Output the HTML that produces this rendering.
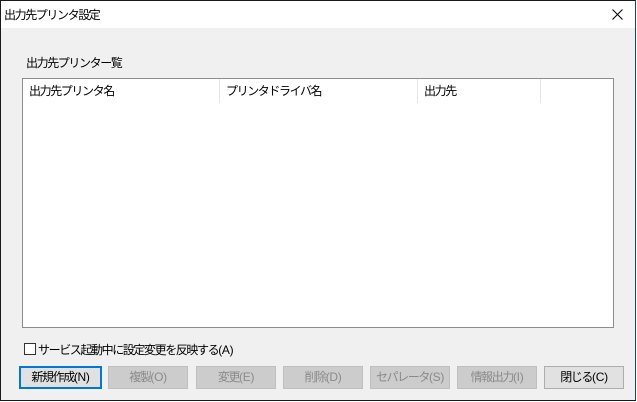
<!DOCTYPE html>
<html><head><meta charset="utf-8"><style>
*{box-sizing:border-box;margin:0;padding:0}
body{width:637px;height:402px;background:#fff;font-family:"Liberation Sans","Noto Sans CJK JP",sans-serif;font-size:12px;color:#000;position:relative;overflow:hidden;letter-spacing:-1.4px}
i{font-style:normal;letter-spacing:-0.3px}
.win{position:absolute;left:0;top:0;width:636px;height:401px;border:1px solid #1a1a1a;border-right-color:#1c3f6e;background:#f0f0f0}
.title{position:absolute;left:0;top:0;width:100%;height:27px;background:#fff}
.title span{position:absolute;left:3px;top:5px;font-size:12px}
.x{position:absolute;right:12px;top:8px}
.lbl{position:absolute;left:25px;top:53px}
.lv{position:absolute;left:21px;top:77px;width:592px;height:250px;background:#fff;border:1px solid #8c8c8c}
.h{position:absolute;top:4px;height:16px;line-height:16px}
.sep{position:absolute;top:0;width:1px;height:24px;background:#e5e5e5}
.cb{position:absolute;left:23px;top:342px;width:12px;height:12px;border:1px solid #333;background:#fff}
.cbl{position:absolute;left:37px;top:340px}
.b{position:absolute;top:365px;height:23px;border:1px solid #adadad;background:#e1e1e1;text-align:center;line-height:21px;color:#000}
.d{color:#8a8a8a;background:#ccc;border-color:#bfbfbf}
.def{border:2px solid #0078d7;line-height:19px}
</style></head><body>
<div class="win">
<div class="title"><span>出力先プリンタ設定</span><svg class="x" width="11" height="11" viewBox="0 0 11 11"><path d="M0.5 0.5L10.5 10.5M10.5 0.5L0.5 10.5" stroke="#000" stroke-width="1"/></svg></div>
<div class="lbl">出力先プリンター覧</div>
<div class="lv">
<div class="h" style="left:6px">出力先プリンタ名</div>
<div class="sep" style="left:196px"></div>
<div class="h" style="left:203px">プリンタドライバ名</div>
<div class="sep" style="left:394px"></div>
<div class="h" style="left:401px">出力先</div>
<div class="sep" style="left:517px"></div>
</div>
<div class="cb"></div>
<div class="cbl">サービス起動中に設定変更を反映する<i>(A)</i></div>
<div class="b def" style="left:18px;width:83px">新規作成<i>(N)</i></div>
<div class="b d" style="left:107px;width:80px">複製<i>(O)</i></div>
<div class="b d" style="left:195px;width:80px">変更<i>(E)</i></div>
<div class="b d" style="left:282px;width:80px">削除<i>(D)</i></div>
<div class="b d" style="left:369px;width:80px">セパレータ<i>(S)</i></div>
<div class="b d" style="left:456px;width:80px">情報出力<i>(I)</i></div>
<div class="b" style="left:543px;width:80px">閉じる<i>(C)</i></div>
</div>
</body></html>
